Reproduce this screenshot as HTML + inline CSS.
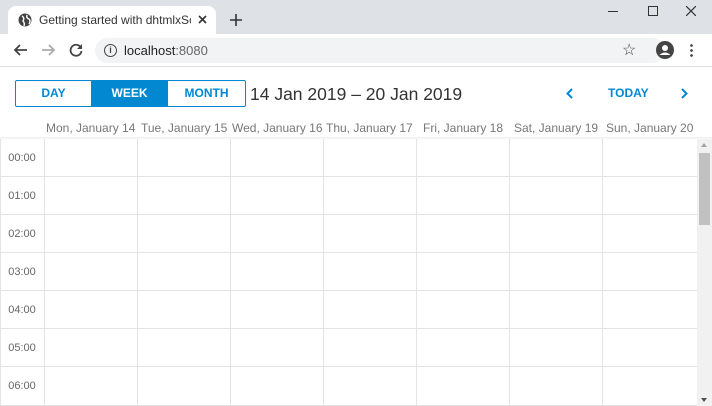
<!DOCTYPE html>
<html><head><style>
*{margin:0;padding:0;box-sizing:border-box}
body{width:712px;height:406px;overflow:hidden;background:#fff;font-family:"Liberation Sans",sans-serif;position:relative}
.a{position:absolute}
.hd{position:absolute;top:121px;font-size:12px;color:#777;white-space:nowrap}
.tm{position:absolute;left:0;width:44px;text-align:center;font-size:11px;color:#666}
.vl{position:absolute;top:139px;height:267px;width:1px;background:#e4e4e4}
.hl{position:absolute;left:0;width:697px;height:1px;background:#e4e4e4}
</style></head><body>
<div class="a" style="left:0;top:0;width:712px;height:34px;background:#dee1e6"></div>
<div class="a" style="left:8px;top:6px;width:208px;height:28px;background:#fff;border-radius:8px 8px 0 0"></div>
<svg class="a" style="left:18px;top:13px" width="14" height="14" viewBox="0 0 14 14"><circle cx="7" cy="7" r="6.5" fill="#444"/><path d="M4 3 Q7 5 5 8 Q7 10 6 13 M9 2 Q8 5 11 6 Q13 8 11 11" stroke="#fff" stroke-width="1.4" fill="none"/></svg>
<div class="a" style="left:39px;top:13px;font-size:12px;color:#333;white-space:nowrap;width:152px;overflow:hidden">Getting started with dhtmlxSchec</div>
<svg class="a" style="left:198px;top:15px" width="9" height="9" viewBox="0 0 9 9"><path d="M1 1L8 8M8 1L1 8" stroke="#333" stroke-width="1.6"/></svg>
<svg class="a" style="left:230px;top:14px" width="12" height="12" viewBox="0 0 12 12"><path d="M6 0V12M0 6H12" stroke="#333" stroke-width="1.6"/></svg>
<div class="a" style="left:608px;top:11px;width:10px;height:1px;background:#333"></div>
<div class="a" style="left:648px;top:6px;width:10px;height:10px;border:1.3px solid #333"></div>
<svg class="a" style="left:686px;top:6px" width="10" height="10" viewBox="0 0 10 10"><path d="M0 0L10 10M10 0L0 10" stroke="#333" stroke-width="1.2"/></svg>
<svg class="a" style="left:13px;top:44px" width="14" height="12" viewBox="0 0 14 12"><path d="M14 6H2M7 1L2 6L7 11" stroke="#444" stroke-width="1.8" fill="none"/></svg>
<svg class="a" style="left:42px;top:44px" width="14" height="12" viewBox="0 0 14 12"><path d="M0 6H12M7 1L12 6L7 11" stroke="#aaa" stroke-width="1.8" fill="none"/></svg>
<svg class="a" style="left:69px;top:43px" width="14" height="14" viewBox="0 0 14 14"><path d="M11.5 4A5.5 5.5 0 1 0 12.5 8" stroke="#444" stroke-width="1.8" fill="none"/><path d="M13 1V6H8Z" fill="#444"/></svg>
<div class="a" style="left:95px;top:38px;width:570px;height:25px;background:#f1f3f4;border-radius:13px"></div>
<div class="a" style="left:104px;top:44px;width:13px;height:13px;border:1.4px solid #444;border-radius:50%;font-size:9px;text-align:center;line-height:10px;font-weight:bold;color:#444">i</div>
<div class="a" style="left:124px;top:43px;font-size:13px;color:#222">localhost<span style="color:#666">:8080</span></div>
<div class="a" style="left:622px;top:40px;font-size:16px;color:#444">☆</div>
<svg class="a" style="left:656px;top:41px" width="18" height="18" viewBox="0 0 18 18"><circle cx="9" cy="9" r="9" fill="#444"/><circle cx="9" cy="7" r="3" fill="#fff"/><path d="M3.5 14 Q9 9 14.5 14" fill="#fff"/></svg>
<div class="a" style="left:690px;top:43px;width:3px;height:14px;background:radial-gradient(circle,#444 1.2px,transparent 1.5px) 0 0/3px 5px"></div>
<div class="a" style="left:0;top:66px;width:712px;height:1px;background:#ddd"></div>
<div class="a" style="left:15px;top:80px;width:231px;height:27px;border:1px solid #0288d1;border-radius:2px;display:flex;font-size:12px;font-weight:bold;color:#0288d1">
<div style="width:75px;text-align:center;line-height:25px">DAY</div>
<div style="width:77px;text-align:center;line-height:25px;background:#0288d1;color:#fff">WEEK</div>
<div style="flex:1;text-align:center;line-height:25px">MONTH</div></div>
<div class="a" style="left:250px;top:84px;font-size:17.5px;color:#333">14 Jan 2019 – 20 Jan 2019</div>
<svg class="a" style="left:566px;top:88px" width="7" height="11" viewBox="0 0 7 11"><path d="M6 1L1.5 5.5L6 10" stroke="#0288d1" stroke-width="2" fill="none"/></svg>
<div class="a" style="left:608px;top:86px;font-size:12px;color:#0288d1;font-weight:bold">TODAY</div>
<svg class="a" style="left:681px;top:88px" width="7" height="11" viewBox="0 0 7 11"><path d="M1 1L5.5 5.5L1 10" stroke="#0288d1" stroke-width="2" fill="none"/></svg>
<div class="hd" style="left:46px">Mon, January 14</div>
<div class="hd" style="left:141px">Tue, January 15</div>
<div class="hd" style="left:232px">Wed, January 16</div>
<div class="hd" style="left:326px">Thu, January 17</div>
<div class="hd" style="left:423px">Fri, January 18</div>
<div class="hd" style="left:514px">Sat, January 19</div>
<div class="hd" style="left:606px">Sun, January 20</div>
<div class="a" style="left:0;top:137px;width:712px;height:3px;background:linear-gradient(#eee,#fff)"></div>
<div class="vl" style="left:0"></div><div class="vl" style="left:44px"></div><div class="vl" style="left:137px"></div><div class="vl" style="left:230px"></div><div class="vl" style="left:323px"></div><div class="vl" style="left:416px"></div><div class="vl" style="left:509px"></div><div class="vl" style="left:602px"></div>
<div class="hl" style="top:176px"></div><div class="hl" style="top:214px"></div><div class="hl" style="top:252px"></div><div class="hl" style="top:290px"></div><div class="hl" style="top:328px"></div><div class="hl" style="top:366px"></div><div class="hl" style="top:405px"></div>
<div class="tm" style="top:152px">00:00</div><div class="tm" style="top:190px">01:00</div><div class="tm" style="top:228px">02:00</div><div class="tm" style="top:266px">03:00</div><div class="tm" style="top:304px">04:00</div><div class="tm" style="top:342px">05:00</div><div class="tm" style="top:380px">06:00</div>
<div class="a" style="left:697px;top:139px;width:15px;height:267px;background:#f1f1f1"></div>
<div class="a" style="left:699px;top:153px;width:11px;height:72px;background:#c1c1c1"></div>
<div class="a" style="left:701px;top:143px;width:0;height:0;border:3.5px solid transparent;border-bottom:4px solid #a3a3a3;border-top:0"></div>
<div class="a" style="left:701px;top:398px;width:0;height:0;border:3.5px solid transparent;border-top:4px solid #505050;border-bottom:0"></div>
</body></html>
